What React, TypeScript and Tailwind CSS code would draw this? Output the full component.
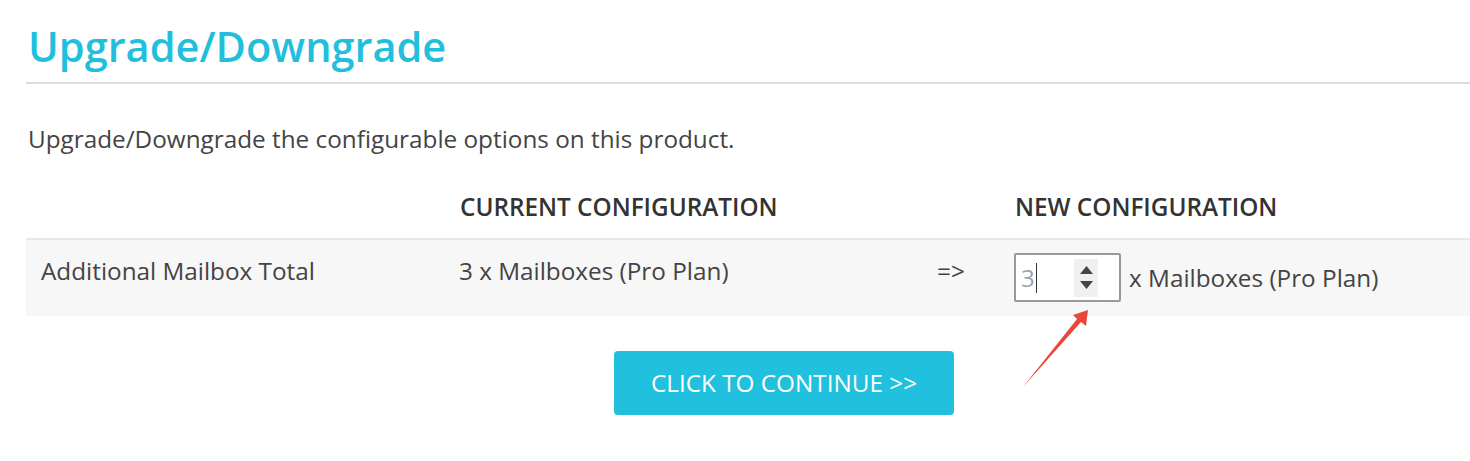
import React from 'react';

// Upgrade/Downgrade configurable options panel

const font = { fontFamily: '"Open Sans", "Noto Sans", sans-serif' };

function Spinner() {
  return (
    <div className="flex h-[38px] w-[24px] flex-col items-center justify-center gap-[7px] bg-[#f0f0f0]">
      <svg width="13" height="8" viewBox="0 0 13 8">
        <path d="M6.5 0L13 8H0z" fill="#444" />
      </svg>
      <svg width="13" height="8" viewBox="0 0 13 8">
        <path d="M0 0h13L6.5 8z" fill="#444" />
      </svg>
    </div>
  );
}

export default function App() {
  return (
    <div className="relative h-[461px] w-[1470px] overflow-hidden bg-white text-[#333]" style={font}>
      <div className="pl-[26px]">
        <h1 className="pl-[2px] pt-[20px] text-[41.5px] leading-[52px] font-semibold text-[#22bfdd]">
          Upgrade/Downgrade
        </h1>
        <div className="mt-[10px] h-[2px] bg-[#dddddd]" />

        <p className="mt-[40px] pl-[2px] text-[24.3px] leading-[30px] text-[#444]">
          Upgrade/Downgrade the configurable options on this product.
        </p>

        <div className="mt-[38px] grid grid-cols-[418px_478px_78px_1fr] items-center border-b-2 border-[#e8e8e8] pb-[16px] text-[24.3px] leading-[30px] font-semibold text-[#333]">
          <div />
          <div className="pl-[16px]">CURRENT CONFIGURATION</div>
          <div />
          <div className="pl-[15px]">NEW CONFIGURATION</div>
        </div>

        <div className="grid h-[76px] grid-cols-[418px_478px_78px_1fr] items-start bg-[#f7f7f7] text-[24.3px] leading-[30px] text-[#444]">
          <div className="pl-[15px] pt-[16px]">Additional Mailbox Total</div>
          <div className="pl-[15px] pt-[16px]">3 x Mailboxes (Pro Plan)</div>
          <div className="pl-[15px] pt-[16px]">=&gt;</div>
          <div className="flex items-center gap-[8px] pl-[14px] pt-[13px]">
            <div className="flex h-[49px] w-[107px] items-center justify-between rounded-[2px] border-2 border-[#999] bg-white pl-[5px] pr-[21px]">
              <span className="flex items-center text-[24px] text-[#9aa4b0]">
                3<span className="ml-[1px] inline-block h-[30px] w-[1px] bg-[#333]" />
              </span>
              <Spinner />
            </div>
            <span>x Mailboxes (Pro Plan)</span>
          </div>
        </div>

        <div className="mt-[35px] flex justify-center pl-[72px]">
          <button className="h-[64px] w-[340px] rounded-[4px] bg-[#21c0de] text-[24.3px] text-white">
            CLICK TO CONTINUE &gt;&gt;
          </button>
        </div>
      </div>

      {/* red annotation arrow */}
      <svg className="absolute left-[1015px] top-[300px]" width="80" height="90" viewBox="0 0 80 90">
        <path d="M8 87L62 19L58 15L73 10L71 26L66 22z" fill="#e8483a" />
      </svg>
    </div>
  );
}
